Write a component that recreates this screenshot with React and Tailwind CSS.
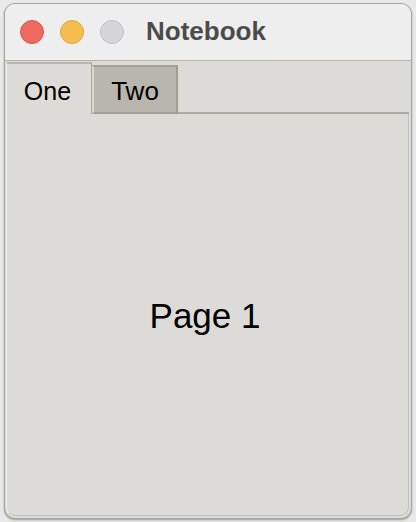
import React from 'react'

const Light = ({ color, ring }) => (
  <div className={`w-6 h-6 rounded-full border ${color} ${ring}`}></div>
)

const App = () => {
  return (
    <div className="w-[416px] h-[522px] bg-[#e9e9e9] pt-[3px] px-[4px] pb-[3px]" style={{ fontFamily: '"Liberation Sans", Arial, sans-serif' }}>
      <div className="h-full flex flex-col rounded-[11px] border border-[#a6a6a6] bg-[#dcdbd7] overflow-hidden shadow-[0_1px_2px_rgba(0,0,0,0.35)]">
        {/* Title bar */}
        <div className="h-[57px] shrink-0 grid grid-cols-[1fr_auto_1fr] items-center bg-[#efeeef] border-b border-[#b4b2ad]">
          <div className="flex items-center gap-4 pl-[15px]">
            <Light color="bg-[#ee6a5f]" ring="border-[#d9574c]" />
            <Light color="bg-[#f5bd4f]" ring="border-[#dea33b]" />
            <Light color="bg-[#d6d5d7]" ring="border-[#bfbec0]" />
          </div>
          <div className="text-[26px] font-bold text-[#4b4b4b] pr-[4px] -mt-[2px]">Notebook</div>
          <div></div>
        </div>

        {/* Tabs */}
        <div className="flex items-end h-[53px] shrink-0 pl-px pt-px">
          <div className="w-[86px] h-[52px] flex items-center justify-center border-t-2 border-l border-r border-t-[#b8b6b0] border-l-[#f2f1ee] border-r-[#a9a69e] bg-[#dcdbd7] text-[25px] text-black pt-[5px] pr-[3px]">
            One
          </div>
          <div className="w-[86px] h-[49px] flex items-center justify-center bg-[#b9b6ad] border-t-2 border-l-2 border-r-2 border-b-2 border-t-[#a3a098] border-l-[#d9d7d1] border-r-[#9f9c94] border-b-[#a19e96] text-[26px] text-black pt-[3px]">
            Two
          </div>
          <div className="flex-1 mr-[2px] border-b-2 border-[#aeaba3]"></div>
        </div>

        {/* Page */}
        <div className="flex-1 ml-px mr-[2px] mb-[2px] border-l border-r border-b border-l-[#f2f1ee] border-r-[#c4c2bc] border-b-[#c4c2bc] rounded-b-[9px] flex items-center justify-center">
          <span className="text-[35px] text-black pr-[5px] pt-[4px]">Page 1</span>
        </div>
      </div>
    </div>
  )
}

export default App
